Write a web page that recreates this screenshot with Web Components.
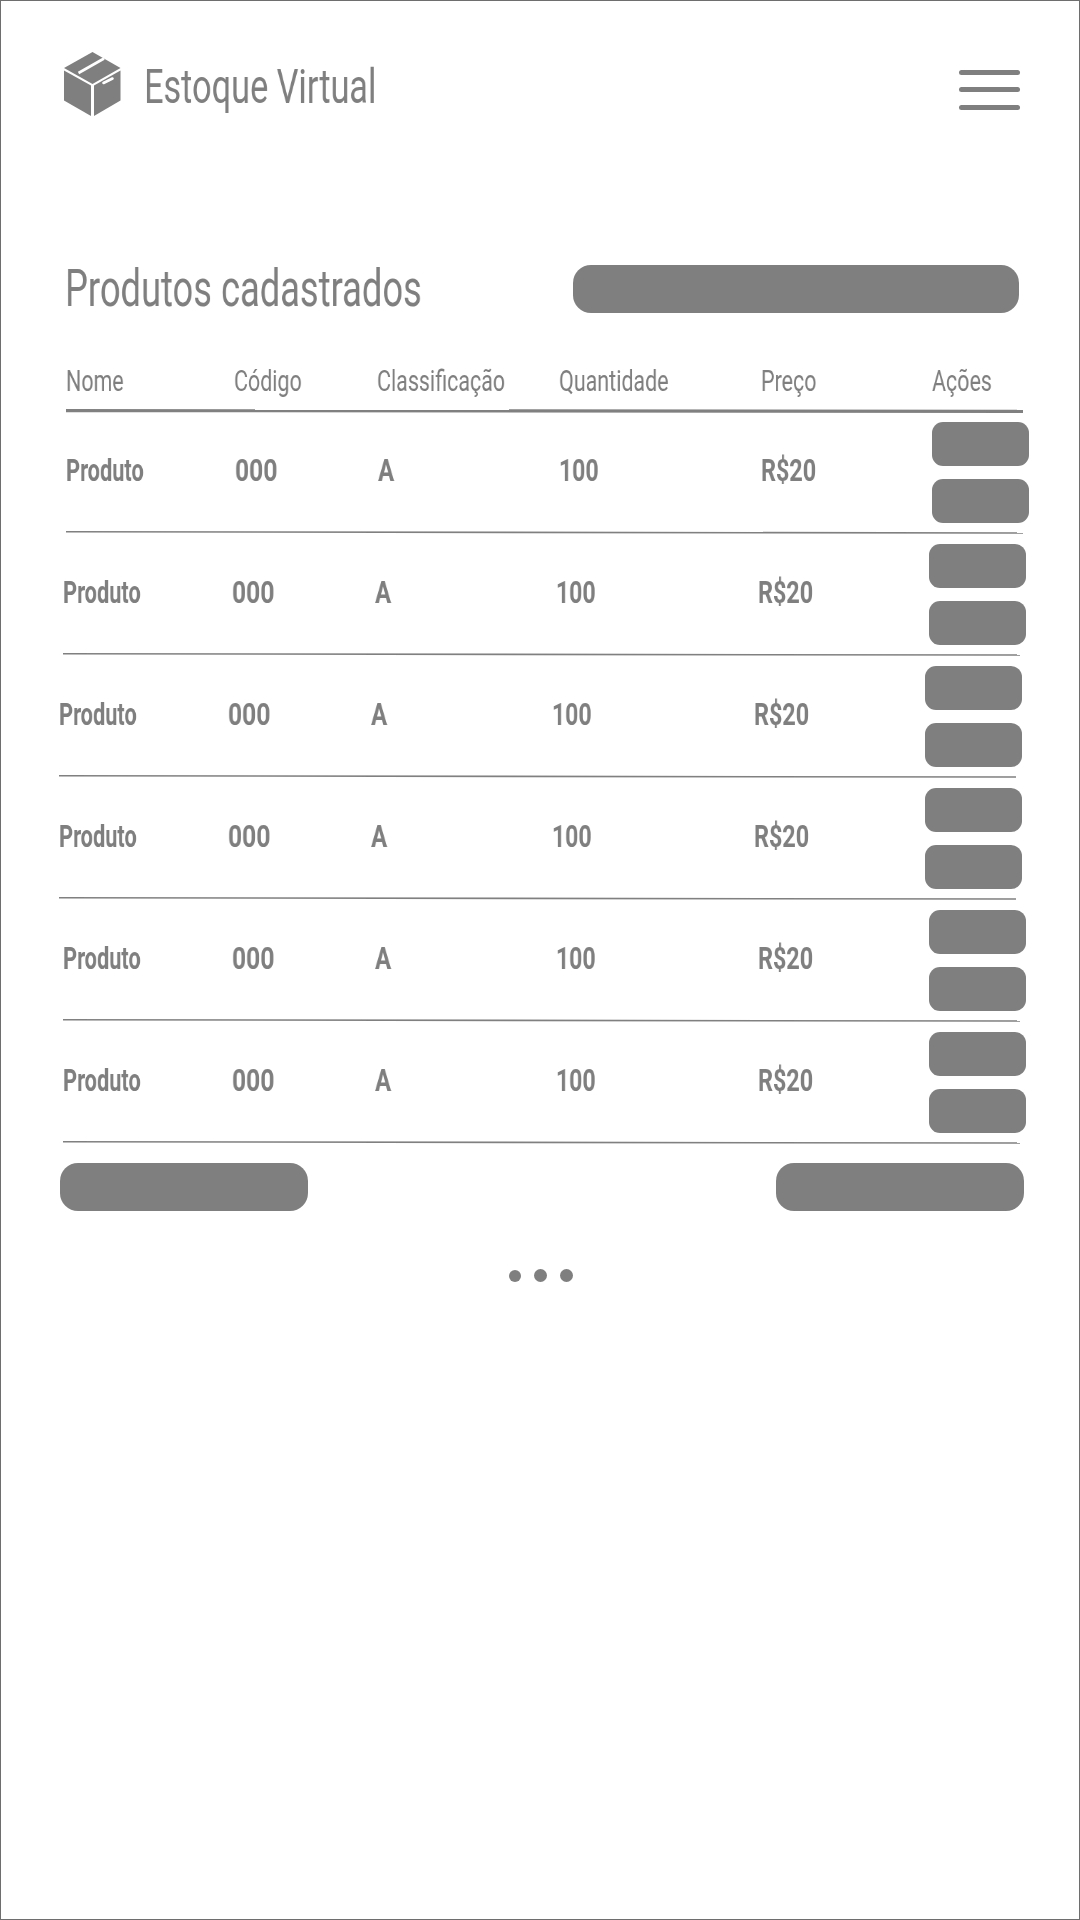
<!DOCTYPE html>
<html lang="pt-BR"><head><meta charset="utf-8"><title>Estoque Virtual</title>
<style>html,body{margin:0;padding:0;background:#fff}</style></head>
<body>
<x-page>
  <x-header slot="header"></x-header>
  <x-titlebar slot="title"></x-titlebar>
  <x-table slot="table">
    <x-row shift="0"></x-row><x-row shift="-3"></x-row><x-row shift="-7"></x-row>
    <x-row shift="-7"></x-row><x-row shift="-3"></x-row><x-row shift="-3"></x-row>
  </x-table>
  <x-footer slot="footer"></x-footer>
</x-page>
<script>
const def=(n,html,init)=>customElements.define(n,class extends HTMLElement{
  connectedCallback(){ if(this.shadowRoot) return; const s=this.attachShadow({mode:'open'}); s.innerHTML=html; init&&init(this,s);} });
const FONT=`"Roboto","Liberation Sans",sans-serif`;

def('x-t',`<style>:host{display:block;font-family:${FONT};color:#7f7f7f;white-space:nowrap;transform-origin:0 50%;transform:scaleX(var(--sx,1));will-change:transform;font-size:var(--fs,32px);font-weight:var(--fw,400);line-height:1.2}</style><slot></slot>`);

def('x-rule',`<style>:host{display:block;height:var(--h,3px);margin-top:var(--mt,0);margin-bottom:-1px}svg{display:block;width:100%;height:100%}</style>
<svg preserveAspectRatio="none"><polygon fill="#808080"/></svg>`,(h,s)=>{
  const heavy=h.hasAttribute('heavy'),t=heavy?4:3,svg=s.querySelector('svg');
  svg.setAttribute('viewBox',`0 0 100 ${t}`);
  s.querySelector('polygon').setAttribute('points',heavy?'0,0 100,.8 100,4 0,3.2':'0,0 100,1.2 100,2.8 0,1.6');
  h.style.setProperty('--h',t+'px');
});

def('x-pill',`<style>:host{display:block;background:#7f7f7f;border-radius:var(--r,18px);width:var(--w);height:var(--ht)}</style>`);

def('x-page',`<style>:host{display:flex;flex-direction:column;box-sizing:border-box;width:1080px;height:1920px;border:1px solid #6e6e6e;background:#fff;overflow:hidden}</style>
<slot name="header"></slot><slot name="title"></slot><slot name="table"></slot><slot name="footer"></slot>`);

def('x-header',`<style>:host{display:flex;align-items:flex-start;justify-content:space-between;padding:48px 59px 0 61px;height:264px;box-sizing:border-box}
.b{display:flex;gap:22px;align-items:center;height:70px}svg{display:block}
.m{display:flex;flex-direction:column;gap:12.3px;width:61px;padding-top:21px}.m i{display:block;height:5px;border-radius:3px;background:#7f7f7f}
x-t{--fs:48px;--sx:.714;width:230px;padding-top:5px}</style>
<div class="b"><svg width="60" height="70" viewBox="0 0 60 70"><g fill="#7f7f7f"><polygon points="30.5,3 58.5,19 30.5,35 2,19"/><polygon points="2,21.5 29,36.5 29,67 2,51.5"/><polygon points="32,36.5 58.5,21.5 58.5,51.5 32,67"/></g>
<path d="M42 9.5 L16.5 24" stroke="#fff" stroke-width="2.6" fill="none"/><path d="M41.5 34 L50.5 29.5" stroke="#fff" stroke-width="2.6" stroke-linecap="round"/></svg>
<x-t>Estoque Virtual</x-t></div>
<div class="m"><i></i><i></i><i></i></div>`);

def('x-titlebar',`<style>:host{display:flex;align-items:center;justify-content:space-between;padding:0 60px 0 64px;height:48px}
x-t{--fs:52px;--sx:.698;width:360px}x-pill{--w:446px;--ht:48px}</style><x-t>Produtos cadastrados</x-t><x-pill></x-pill>`);

const GRID=`display:grid;grid-template-columns:168px 143px 182px 202px 171px 97px;`;
def('x-table',`<style>:host{display:block;padding:0 56px 0 65px;margin-top:32px}
.h{${GRID}height:64px;box-sizing:border-box;padding-top:7px;align-items:center}x-t{--fs:30px;--sx:.715}</style>
<div class="h"><x-t>Nome</x-t><x-t>Código</x-t><x-t>Classificação</x-t><x-t>Quantidade</x-t><x-t>Preço</x-t><x-t>Ações</x-t></div>
<x-rule heavy></x-rule><slot></slot>`);

def('x-row',`<style>:host{display:block;box-sizing:border-box;height:122px}
.g{${GRID}height:120px;align-items:center;position:relative}
.g>x-t{--fs:32px;--fw:700;margin-bottom:3px}.a{display:flex;flex-direction:column;gap:13px}x-pill{--w:97px;--ht:44px;--r:11px}x-rule{--mt:-1px}</style>
<div class="g"><x-t style="--sx:.68">Produto</x-t><x-t style="--sx:.77;margin-left:1px">000</x-t><x-t style="--sx:.75;margin-left:1px">A</x-t><x-t style="--sx:.72">100</x-t><x-t style="--sx:.73">R$20</x-t><div class="a"><x-pill></x-pill><x-pill></x-pill></div></div><x-rule></x-rule>`,
(h)=>{const v=+h.getAttribute('shift')||0;h.style.marginLeft=v+'px';h.style.marginRight=(-v)+'px'});

def('x-footer',`<style>:host{display:block;padding:19px 55px 0 59px}
.r{display:flex;justify-content:space-between}x-pill{--w:248px;--ht:48px}
.d{display:flex;justify-content:center;align-items:center;gap:13px;margin-top:58px;margin-left:-3px}.d i{display:block;width:13px;height:13px;border-radius:50%;background:#7f7f7f}.d i:first-child{width:12px;height:12px}</style>
<div class="r"><x-pill></x-pill><x-pill></x-pill></div><div class="d"><i></i><i></i><i></i></div>`);
</script>
</body></html>
